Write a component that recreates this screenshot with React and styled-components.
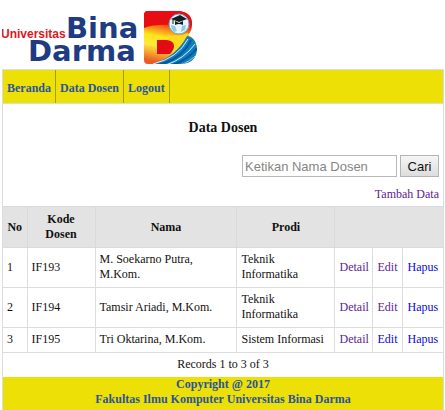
import React from 'react';
import styled, { createGlobalStyle } from 'styled-components';

const GlobalStyle = createGlobalStyle`
* {
	box-sizing: border-box;
}
body {
	margin: 0 1px 0 2px;
	background: #ffffff;
	color: #111111;
	font-family: "Liberation Serif", "Times New Roman", serif;
	font-size: 12px;
	line-height: 15px;
}
`

const Banner = styled.header`
padding-top: 8px;
height: 69px;
`

const LogoSvg = styled.svg`
display: block;
margin-left: -2px;
`

const LogoText = styled.text`
font-family: ${(props) => (props.$small ? '"Liberation Sans", Arial, sans-serif' : '"DejaVu Sans", sans-serif')};
font-size: ${(props) => (props.$small ? '12px' : '29px')};
font-weight: bold;
fill: ${(props) => (props.$small ? '#e01622' : '#1d3c82')};
`

const Panel = styled.div`
border: 1px solid #dcdcdc;
border-bottom: 0;
`

const Nav = styled.nav`
display: flex;
background: #ece006;
border-bottom: 1px solid #dcdcd0;
`

const NavLink = styled.a`
padding: 11px 4px 7px;
border-right: 1px solid #a39b1c;
color: #2a549c;
font-weight: bold;
text-decoration: none;
`

const Title = styled.h1`
margin: 0;
padding: 15px 0 18px;
font-size: 14px;
line-height: 18px;
text-align: center;
`

const SearchForm = styled.form`
display: flex;
justify-content: flex-end;
gap: 3px;
padding-right: 4px;
`

const SearchInput = styled.input`
width: 155px;
height: 22px;
padding: 0 2px;
border: 1px solid #b8b8b8;
border-radius: 0;
font-family: "Liberation Sans", Arial, sans-serif;
font-size: 13px;
&::placeholder {
	color: #858585;
	opacity: 1;
}
`

const SearchButton = styled.button`
width: 39px;
height: 22px;
padding: 0;
border: 1px solid #b4b4b4;
background: linear-gradient(#f6f6f6, #dddddd);
color: #111111;
font-family: "Liberation Sans", Arial, sans-serif;
font-size: 13px;
`

const AddRow = styled.div`
display: flex;
justify-content: flex-end;
padding: 10px 4px 4px;
`

const TextLink = styled.a`
color: ${(props) => (props.$visited ? '#5b2590' : '#0808d8')};
text-decoration: none;
`

const Table = styled.table`
width: 100%;
table-layout: fixed;
border-collapse: collapse;
`

const Col = styled.col`
width: ${(props) => props.$width};
`

const Th = styled.th`
padding: 5px 4px;
border: 1px solid #dadada;
border-left-width: ${(props) => (props.$first ? '0' : '1px')};
border-right-width: ${(props) => (props.$last ? '0' : '1px')};
background: #e3e3e3;
text-align: center;
`

const Td = styled.td`
padding: 4px 4px 5px;
border: 1px solid #dddddd;
border-left-width: ${(props) => (props.$first ? '0' : '1px')};
border-right-width: ${(props) => (props.$last ? '0' : '1px')};
`

const Records = styled.p`
margin: 0;
padding: 4px 0 5px;
text-align: center;
`

const Footer = styled.footer`
padding: 0 0 3px;
background: #ece006;
color: #2a549c;
font-weight: bold;
text-align: center;
`

const lecturers = [
	{ kode: 'IF193', nama: 'M. Soekarno Putra, M.Kom.', prodi: 'Teknik Informatika', editSeen: true },
	{ kode: 'IF194', nama: 'Tamsir Ariadi, M.Kom.', prodi: 'Teknik Informatika', editSeen: true },
	{ kode: 'IF195', nama: 'Tri Oktarina, M.Kom.', prodi: 'Sistem Informasi', editSeen: false },
];

const columns = ['24px', '68px', 'auto', '98px', '38px', '30px', '40px'];

const Logo = () => (
	<LogoSvg width="200" height="60" viewBox="0 8 200 60" role="img" aria-label="Universitas Bina Darma">
		<defs>
			<linearGradient id="flame" x1="0.6" y1="0" x2="0.4" y2="1">
				<stop offset="0.2" stopColor="#e80d12" />
				<stop offset="0.38" stopColor="#f98a1c" />
				<stop offset="0.52" stopColor="#ffe51c" />
				<stop offset="0.7" stopColor="#ffe93a" />
				<stop offset="1" stopColor="#ea5a25" />
			</linearGradient>
			<clipPath id="letter">
				<path d="M148 11h29c10 0 15 5 15 13 0 5-1 8-4 11 6 3 9 8 9 15-1 9-7 14-17 14h-32q-4 0-4-4V15q0-4 4-4z" />
			</clipPath>
		</defs>
		<LogoText $small x="1" y="38">Universitas</LogoText>
		<LogoText x="66" y="38">Bina</LogoText>
		<LogoText x="28" y="61">Darma</LogoText>
		<g clipPath="url(#letter)">
			<path fill="url(#flame)" d="M144 11h53v53h-53z" />
			<path fill="#e80d12" d="M144 11h53v14h-25q-18-1-28 3z" />
			<path fill="#ffd91c" d="M168 35q12 2 20-2l-2 16-12 7z" />
			<path fill="#e30c16" d="M157 40h10q7 1 7 6 0 4-4 8h-13z" />
			<path fill="#0e7fbd" d="M151 65q25-8 36-29l12 4v26z" />
			<path fill="none" stroke="#d8f0fa" strokeWidth="1" d="M153 64q25-6 35-25M166 65q18-6 29-21" />
			<path fill="none" stroke="#075797" strokeWidth="2" d="M158 65q24-6 33-25M172 65q16-5 25-17" />
			<path fill="none" stroke="#8bcce8" strokeWidth="1" d="M180 65q11-4 17-11" />
		</g>
		<circle cx="179" cy="24" r="10" fill="#e8f5fb" stroke="#5fb0d8" strokeWidth="1" />
		<path fill="#8cc9e8" d="M171 25l4 1 2 5-3 1q-3-3-3-7zM182 26l4-1-1 5-4 2z" />
		<path fill="#151d25" d="M171 19l9-4 7 4-8 3zM175 21l4 2 4-2v4q-4-2-8 0z" />
		<path fill="none" stroke="#151d25" d="M173 19v5" />
	</LogoSvg>
);

const App = () => {
	return (
		<>
			<GlobalStyle />
			<Banner>
				<Logo />
			</Banner>
			<Panel>
				<Nav>
					<NavLink href="#beranda">Beranda</NavLink>
					<NavLink href="#dosen">Data Dosen</NavLink>
					<NavLink href="#logout">Logout</NavLink>
				</Nav>
				<main>
					<Title>Data Dosen</Title>
					<SearchForm>
						<SearchInput type="text" aria-label="Nama Dosen" placeholder="Ketikan Nama Dosen" />
						<SearchButton type="button">Cari</SearchButton>
					</SearchForm>
					<AddRow>
						<TextLink $visited href="#tambah">Tambah Data</TextLink>
					</AddRow>
					<Table>
						<colgroup>
							{columns.map((width, i) => (
								<Col key={i} $width={width} />
							))}
						</colgroup>
						<thead>
							<tr>
								<Th $first>No</Th>
								<Th>Kode Dosen</Th>
								<Th>Nama</Th>
								<Th>Prodi</Th>
								<Th $last colSpan={3} />
							</tr>
						</thead>
						<tbody>
							{lecturers.map((item, i) => (
								<tr key={item.kode}>
									<Td $first>{i + 1}</Td>
									<Td>{item.kode}</Td>
									<Td>{item.nama}</Td>
									<Td>{item.prodi}</Td>
									<Td><TextLink $visited href="#detail">Detail</TextLink></Td>
									<Td><TextLink $visited={item.editSeen} href="#edit">Edit</TextLink></Td>
									<Td $last><TextLink href="#hapus">Hapus</TextLink></Td>
								</tr>
							))}
						</tbody>
					</Table>
					<Records>Records 1 to 3 of 3</Records>
				</main>
				<Footer>
					Copyright @ 2017<br />
					Fakultas Ilmu Komputer Universitas Bina Darma
				</Footer>
			</Panel>
		</>
	);
};

export default App;
